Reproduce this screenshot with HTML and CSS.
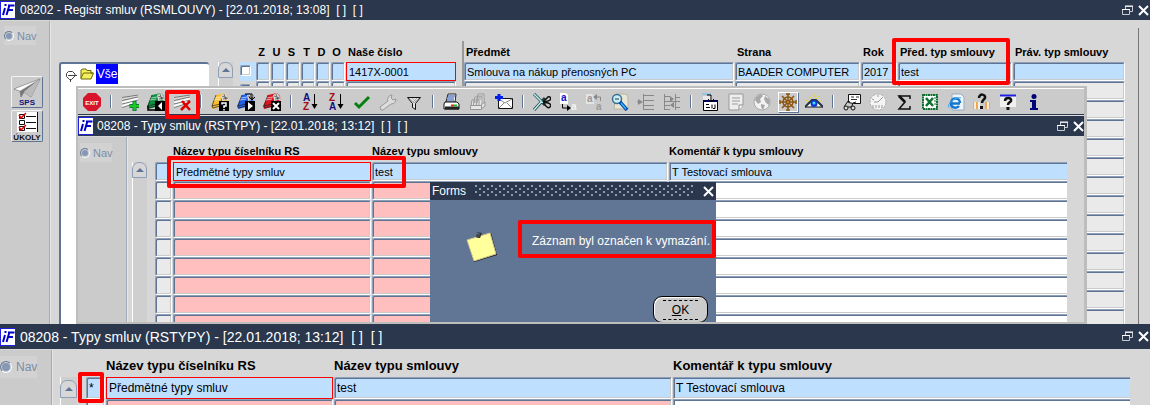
FILE: index.html
```html
<!DOCTYPE html>
<html lang="cs">
<head>
<meta charset="utf-8">
<title>Registr smluv</title>
<link rel="stylesheet" href="styles.css">
</head>
<body>
<svg class="defs" aria-hidden="true">
  <symbol id="logo" viewBox="0 0 16 18">
    <rect width="16" height="18" fill="#fff"/><path d="M0 .5h16M0 17.5h16M15.5 0v18M.5 0v18" stroke="#2020e0"/>
    <path d="M5 7 3 14M5.500 3v2M9.500 4 6.500 14M8 4.500h6.500M8 9h5" stroke="#0000c8" stroke-width="2" fill="none"/>
  </symbol>
  <symbol id="restore" viewBox="0 0 11 11">
    <path d="M3.500 4V1.500h7v5H8M3 1.500h8" stroke="#c8ccd2" fill="none"/><path d="M.5 4.500h7v5h-7z" stroke="#c8ccd2" fill="none"/><path d="M3 1h8M0 4.500h8" stroke="#fff"/>
  </symbol>
  <symbol id="close" viewBox="0 0 11 11"><path d="m1 1 9 9M10 1 1 10" stroke="#fff" stroke-width="2"/></symbol>
  <symbol id="sheet" viewBox="0 0 18 18">
    <path d="M1 4 17 1v8L1 15z" fill="#d8d8d4"/><path d="M1 4.500 17 2M1 7.500 17 4M1 11 17 7M1 14.500 15 10" stroke="#777" fill="none"/><path d="M1 9.500 17 5.500M1 13 14 9" stroke="#fff" stroke-width="1.500"/>
  </symbol>
  <symbol id="book" viewBox="0 0 18 18">
    <path d="M5 2 14 0l3 3 1 8-9 3-8 2-1-3z" fill="currentColor"/><path d="M5 2 1 13l8-2 3-8M1 13l1 2 7-2" stroke="#222" fill="none" stroke-width=".7"/><path d="m10 2 4-2 3 4 1 4-3-1-4 1z" fill="#d8d8d8"/><path d="m11 3 5 2M13 1l2 6M12 6l5-1" stroke="#444" stroke-width=".7"/><path d="m4 5 6-1M3 7l6-1" stroke="#fff" stroke-opacity=".6"/>
    <path d="M8 8h10v10H8z" fill="#000"/>
  </symbol>
</svg>

<main class="desktop">
<section class="window window-main">
  <header class="titlebar">
    <svg class="logo"><use href="#logo"/></svg>
    <h1>08202 - Registr smluv (RSMLOUVY) - [22.01.2018; 13:08]&nbsp; [ ]&nbsp; [ ]</h1>
    <button class="win-btn" aria-label="Obnovit"><svg><use href="#restore"/></svg></button>
    <button class="win-btn" aria-label="Zavřít"><svg><use href="#close"/></svg></button>
  </header>
  <div class="workspace">
    <aside class="side">
      <label class="nav"><input type="radio" name="nav-main" checked>Nav</label>
      <button class="tile" aria-label="SPS">
        <svg viewBox="0 0 30 30"><path d="M2 12 28 2 19 20l-7-5-3 5-1-6z" fill="#eee" stroke="#777" stroke-width=".8"/><path d="M8 14 28 2 12 15l-3 5z" fill="#777"/><path d="m12 15 16-13-9 18z" fill="#bbb"/><path d="M2 12 28 2 8 14z" fill="#fff" stroke="#888" stroke-width=".5"/><text x="15" y="28" text-anchor="middle" class="sps-text">SPS</text></svg>
      </button>
      <button class="tile" aria-label="ÚKOLY">
        <svg viewBox="0 0 30 30"><path d="M5 1h20v20H5z" fill="#fff"/><path d="M7.500 3.500h5v4h-5zM7.500 9.500h5v4h-5zM7.500 15.500h5v4h-5zM14 5.500h10M14 11.500h10M14 17.500h10M25.500 1v20" fill="none" stroke="#111"/><path d="m7 4 2 3 5-5M7 16l2 3 5-5" fill="none" stroke="#e00000" stroke-width="1.500"/><text x="15" y="29" text-anchor="middle" class="tasks-text">ÚKOLY</text></svg>
      </button>
    </aside>
    <div class="tree">
      <svg class="tree-toggle" viewBox="0 0 13 12"><path d="m3.500 1.500h4l2.500 2.500v2l-3.500 3.500h-2L1.500 6.500v-3z" fill="#fff" stroke="#444"/><path d="M3 5.500h9M5.500 9v3" stroke="#444"/></svg>
      <svg class="tree-folder" viewBox="0 0 14 12"><path d="M1 10V2l2-1h3l1 1.500h4V5h2.500L11 11H1z" fill="#f4ee60" stroke="#6b6800"/><path d="m1 10 2.500-5H13" fill="none" stroke="#6b6800"/></svg>
      <span class="tree-item">Vše</span>
    </div>
    <div class="scroll scroll-main"><button aria-label="Nahoru"></button></div>
    <div class="records records-main">
      <table>
        <colgroup><col class="w-check"><col class="w-flag" span="6"><col class="w-number"><col><col class="w-party"><col class="w-year"><col class="w-subject"><col class="w-legal"></colgroup>
        <thead><tr><th></th><th class="flag">Z</th><th class="flag">U</th><th class="flag">S</th><th class="flag">T</th><th class="flag">D</th><th class="flag">O</th><th class="ruled">Naše číslo</th><th>Předmět</th><th>Strana</th><th>Rok</th><th class="marked">Před. typ smlouvy<span class="highlight highlight-type"></span></th><th>Práv. typ smlouvy</th></tr></thead>
        <tbody data-empty-rows="13">
          <tr class="current"><td class="check"><input type="checkbox" aria-label="Vybrat"></td><td><input aria-label="Z"></td><td><input aria-label="U"></td><td><input aria-label="S"></td><td><input aria-label="T"></td><td><input aria-label="D"></td><td><input aria-label="O"></td><td class="ruled"><input class="focus" aria-label="Naše číslo" value="1417X-0001"></td><td><input aria-label="Předmět" value="Smlouva na nákup přenosných PC"></td><td><input aria-label="Strana" value="BAADER COMPUTER"></td><td><input aria-label="Rok" value="2017"></td><td><input aria-label="Před. typ smlouvy" value="test"></td><td><input aria-label="Práv. typ smlouvy"></td></tr>
        </tbody>
      </table>
    </div>
  </div>

  <section class="window window-types">
    <nav class="toolbar">
      <button aria-label="Konec"><svg viewBox="0 0 18 18"><path d="M5 0h8l5 5v8l-5 5H5l-5-5V5z" fill="#d8142c"/><text x="9" y="12" text-anchor="middle" class="exit-text">EXIT</text></svg></button><i></i>
      <button aria-label="Vložit"><svg viewBox="0 0 18 18"><use href="#sheet"/><path d="M13.500 8v10M8.500 13h10" stroke="#064" stroke-width="4"/><path d="M13.500 8.500v9M9 13h9" stroke="#20c820" stroke-width="2.500"/></svg></button>
      <button aria-label="Předchozí"><svg viewBox="0 0 18 18"><use href="#book" color="#0b9040"/><path d="m15 9-4 4 4 4z" fill="#fff"/><path d="M1 13v4h7" fill="none" stroke="#000" stroke-width="1.500"/></svg></button>
      <button class="marked" aria-label="Smazat"><svg viewBox="0 0 18 18"><use href="#sheet"/><path d="m9 8 8 9M17 8l-9 9" stroke="#e00000" stroke-width="2.500"/></svg><span class="highlight highlight-delete"></span></button><i></i>
      <button aria-label="Zadat dotaz"><svg viewBox="0 0 18 18"><use href="#book" color="#f8c030"/><path d="M11 11.500V10h4v3h-2v2M13 16v1.500" fill="none" stroke="#fff" stroke-width="1.500"/></svg></button>
      <button aria-label="Provést dotaz"><svg viewBox="0 0 18 18"><use href="#book" color="#2060e8"/><path d="m11 9 5 4-5 4z" fill="#fff"/><path d="M8 1h7v5m-3-2 3 3 3-3" fill="none" stroke="#000"/></svg></button>
      <button aria-label="Zrušit dotaz"><svg viewBox="0 0 18 18"><use href="#book" color="#d81820"/><path d="m10 10 6 6M16 10l-6 6" stroke="#fff" stroke-width="2"/></svg></button><i></i>
      <button aria-label="Řadit vzestupně"><svg viewBox="0 0 18 18"><text x="2" y="8" class="sort-blue">A</text><text x="2" y="17" class="sort-red">Z</text><path d="M13.500 1v12" stroke="#000"/><path d="M10.500 11h6l-3 5z"/></svg></button>
      <button aria-label="Řadit sestupně"><svg viewBox="0 0 18 18"><text x="2" y="8" class="sort-red">Z</text><text x="2" y="17" class="sort-blue">A</text><path d="M13.500 1v12" stroke="#000"/><path d="M10.500 11h6l-3 5z"/></svg></button>
      <button aria-label="Uložit"><svg viewBox="0 0 18 18"><path d="m2 10 4 4L16 4" fill="none" stroke="#078010" stroke-width="3"/></svg></button>
      <button aria-label="Nástroje"><svg viewBox="0 0 18 18"><path d="M2 17 1 14l8-6c-1-3 1-6 4-6l-1 3 2 2 3-1c0 3-2 5-5 5l-8 6z" fill="#ddd" stroke="#999"/></svg></button>
      <button aria-label="Filtr"><svg viewBox="0 0 18 18"><path d="M2.500 4.500h13l-5 6v6l-3-2v-4z" fill="#e4e4e4" stroke="#111"/><path d="m4 5 5 5 5-5M7 5l4 4M8 9l4-4" stroke="#888" fill="none" stroke-width=".6"/></svg></button><i></i>
      <button aria-label="Tisk"><svg viewBox="0 0 18 18"><path d="M5 1h8l-1 8H3z" fill="#fff" stroke="#222"/><path d="M5 3h7M5 5h6M4 7h7" stroke="#14a"/><path d="M2 9h12l2 2v5H1v-5z" fill="#fff" stroke="#111"/><path d="M2 13.500h14v3H2z" fill="#222"/><path d="M8 12.500h3" stroke="#e22" stroke-width="2"/><path d="M11 12.500h3" stroke="#2b2" stroke-width="2"/></svg></button>
      <button aria-label="Tisk více"><svg viewBox="0 0 18 18" fill="#e6e6e6" stroke="#969696"><path d="M9 1h6v10l-4 3H7zM6 4h7v10H4zM3 7h7v6H2z"/><path d="M1.500 12.500h11v4h-11zM12 12l4-3v4l-4 3M4 9h5M7 6h5M9 3h5"/></svg></button>
      <button aria-label="Poslat"><svg viewBox="0 0 18 18"><path d="M3.500 5.500h14v10h-14z" fill="#fff" stroke="#111"/><path d="m4 6 6 4 7-4M4 15l5-5m8 5-5-5" fill="none" stroke="#888"/><path d="M4 1v7M0 4.500h8" stroke="#0020e8" stroke-width="3"/></svg></button><i></i>
      <button aria-label="Vyjmout"><svg viewBox="0 0 18 18"><path d="M1 1 12 12M1 17 12 5" stroke="#244" stroke-width="3"/><path d="m1 1 9 9M1 17l8-9" stroke="#b8eef4" stroke-width="1.500"/><path d="m10 9 4-4c2-3 5 0 3 2s-5 1-6 2 4 0 6 2-1 5-3 3l-4-4" fill="none" stroke="#111" stroke-width="1.500"/></svg></button>
      <button aria-label="Kopírovat"><svg viewBox="0 0 18 18"><path d="M1 0h6l2 2v9H1z" fill="#fff"/><text x="2" y="8" class="copy-blue">a</text><text x="12" y="17" class="copy-white">a</text><path d="M3.500 11v4h5" fill="none" stroke="#000"/><path d="m8 12 4 3-4 3z"/></svg></button>
      <button aria-label="Vložit text"><svg viewBox="0 0 18 18"><path d="M1 1h6l2 2v8H1z" fill="#e4e4e4"/><text x="2" y="9" class="copy-gray">a</text><text x="11" y="17" class="copy-gray">a</text><path d="M15.500 8V4H11" fill="none" stroke="#888"/><path d="m12 1-4 3 4 3z" fill="#888"/></svg></button>
      <button aria-label="Hledat"><svg viewBox="0 0 18 18"><path d="M5 1h10l2 3v12H3z" fill="#e9e6d6" stroke="#b8b4a4"/><circle cx="6" cy="6" r="4.500" fill="#c6edf8" stroke="#3a7090" stroke-width="1.500"/><path d="M4 6h4" stroke="#333"/><path d="m9 9 7 8" stroke="#0048b0" stroke-width="3.500"/><path d="m10 10 5 6" stroke="#30b8f8" stroke-width="1.500"/></svg></button>
      <button aria-label="Odsadit"><svg viewBox="0 0 18 18"><path d="M6.500 1v16M7 2.500h10M7 7.500h10M7 12.500h10M7 16.500h10" stroke="#888"/><path d="M0 9h3" stroke="#888"/><path d="m1 6 5 3-5 3z" fill="#888"/></svg></button>
      <button aria-label="Zarovnat"><svg viewBox="0 0 18 18"><path d="M1.500 1v16M12.500 1v16M2 3.500h5M2 8.500h15M2 12.500h5M2 16.500h5M12 4.500h5M12 14.500h5" stroke="#888"/><path d="m7 3 4 3-4 3zM11 9l-4 3 4 3z" fill="#888"/></svg></button><i></i>
      <button aria-label="Kalendář"><svg viewBox="0 0 18 18"><path d="M1 1h9" stroke="#60c0f8"/><path d="M2 3h9v5H2z" fill="#e8e8e8"/><path d="M2.500 7.500h14v10h-14z" fill="#fff" stroke="#000"/><path d="M2 8h15" stroke="#000050" stroke-width="2"/><path d="M6 2h4v6M7 6l3 3 3-3M5 11.500h3M5 14.500h4m2-3v4m3-4v4h-2" fill="none" stroke="#000"/></svg></button>
      <button aria-label="Poznámka"><svg viewBox="0 0 18 18"><path d="M2 1h14v11l-4 5H2z" fill="#eee" stroke="#999"/><path d="M5 5h8M5 8h8M5 11h6" stroke="#999"/><path d="M12 17v-5h4" fill="#fff" stroke="#888"/></svg></button>
      <button aria-label="Web"><svg viewBox="0 0 18 18"><circle cx="9" cy="9" r="8" fill="#f2f2f2" stroke="#a8a8a8"/><path d="m3 4 5-3 2 2-3 3 1 3-3 2-3-4zM8 11l4 1-2 5-2-3zM12 3l5 4-1 5-3-2-2-4z" fill="#a8a8a8"/></svg></button>
      <button class="raised" aria-label="Navigátor"><svg viewBox="0 0 18 18" fill="none" stroke="#8b5510" stroke-width="1.500"><circle cx="9" cy="9" r="5"/><path d="M9 1v16M1 9h16M3 3l12 12M15 3 3 15M7 1h4M7 17h4M1 7v4M17 7v4"/><circle cx="9" cy="9" r="1.500" fill="#e8c070"/></svg></button>
      <button aria-label="Zobrazit"><svg viewBox="0 0 18 18"><path d="m1 7 3 2m0-6 3 3m2-5v3m5-1-3 3m6 1-3 2" stroke="#e8d820"/><path d="m0 14 7-7h4l7 7z" fill="#fff" stroke="#111"/><path d="m0 14 7-7h4l7 7" fill="none" stroke="#234" stroke-width="2"/><circle cx="9" cy="10.500" r="3.500" fill="#1038d0"/><circle cx="9" cy="10" r="1.500" fill="#40e0ff"/></svg></button><i></i>
      <button aria-label="Prohlížet"><svg viewBox="0 0 18 18"><path d="M5.500 1.500h12v9h-7l-5-1z" fill="#fff" stroke="#111"/><path d="M8 4h3m2 0h3M8 6.500h6" stroke="#333"/><path d="M1 14 5 8l2 1M8 15l2-5 3-1" fill="none" stroke="#111"/><circle cx="3" cy="15" r="2" fill="#ddd" stroke="#111"/><circle cx="10" cy="15" r="2" fill="#ddd" stroke="#111"/><path d="M5 14h3" stroke="#111"/></svg></button>
      <button aria-label="Čas"><svg viewBox="0 0 18 18"><circle cx="9" cy="9" r="8" fill="#f4f4f4" stroke="#b0b0b0" stroke-dasharray="3 1"/><path d="m9 9 5-5M9 9H5M9 2v2M3 6l2 1" stroke="#999"/><path d="M4 12v3m3-3v3m3-3v3m3-3v3" stroke="#999"/></svg></button>
      <button aria-label="Součet"><svg viewBox="0 0 18 18"><path d="M15 6V3H4l6 6-6 7h11v-3" fill="none" stroke="#111" stroke-width="1.500"/><path d="m4 3 6 6" stroke="#111" stroke-width="2.500"/></svg></button>
      <button aria-label="Excel"><svg viewBox="0 0 18 18"><path d="M2 2h14v14H2z" fill="#fff" stroke="#107030" stroke-width="2" stroke-dasharray="2 .5"/><path d="m5 5 7 8M12 5l-7 8" stroke="#107030" stroke-width="2.500"/><path d="M13 5h2m-2 3h2m-2 3h2" stroke="#107030"/></svg></button>
      <button aria-label="Prohlížeč"><svg viewBox="0 0 18 18"><path d="M5 1h9l3 3v13H5z" fill="#eef4fc" stroke="#9ab"/><path d="M13 10.500H4c0 5 6 5 8 2.500M4 10c0-6 9-6 9 0" fill="none" stroke="#1478d0" stroke-width="2.500"/><path d="M2 15c-3-4 7-12 12-10" fill="none" stroke="#40a8f0"/></svg></button>
      <button aria-label="Podpora"><svg viewBox="0 0 18 18"><path d="M0 9h5v7H0zM12 9h5v7h-5z" fill="#f0a850"/><path d="M2 9v7m4-7v7m9-7v7" stroke="#fff" stroke-width="1.500"/><path d="M6 5c0-5 7-4 6 0-1 2-3 2-3 5" fill="none" stroke="#111" stroke-width="2.500"/><path d="M7 13h3v3H7z" fill="#111"/></svg></button>
      <button aria-label="Nápověda"><svg viewBox="0 0 18 18"><path d="M1 2h16v12H1z" fill="#f0f0f0"/><path d="M1 2.500h16" stroke="#2020e0" stroke-width="2"/><path d="M6 8c0-4 7-4 6 0-1 2-3 1-3 4" fill="none" stroke="#111" stroke-width="2.500"/><path d="M7.500 14h3v3h-3z" fill="#111"/></svg></button>
      <button aria-label="Informace"><svg viewBox="0 0 18 18" fill="#000078"><circle cx="9" cy="3.500" r="2.500"/><path d="M5 7h6v8h2v2H5v-2h2V9H5z"/></svg></button>
    </nav>
    <header class="titlebar">
      <svg class="logo"><use href="#logo"/></svg>
      <h2>08208 - Typy smluv (RSTYPY) - [22.01.2018; 13:12]&nbsp; [ ]&nbsp; [ ]</h2>
      <button class="win-btn" aria-label="Obnovit"><svg><use href="#restore"/></svg></button>
      <button class="win-btn" aria-label="Zavřít"><svg><use href="#close"/></svg></button>
    </header>
    <div class="workspace">
      <aside class="side"><label class="nav"><input type="radio" name="nav-types" checked>Nav</label></aside>
      <div class="scroll"><button aria-label="Nahoru"></button></div>
      <div class="records">
        <table>
          <colgroup><col class="w-mark"><col class="w-list"><col class="w-type"><col></colgroup>
          <thead><tr><th></th><th>Název typu číselníku RS</th><th>Název typu smlouvy</th><th>Komentář k typu smlouvy</th></tr></thead>
          <tbody data-empty-rows="8">
            <tr class="current"><td><input aria-label="Příznak"></td><td class="required marked"><input class="focus" aria-label="Název typu číselníku RS" value="Předmětné typy smluv"><span class="highlight highlight-record"></span></td><td class="required"><input aria-label="Název typu smlouvy" value="test"></td><td class="open"><input aria-label="Komentář k typu smlouvy" value="T Testovací smlouva"></td></tr>
          </tbody>
        </table>
      </div>
    </div>
    <div class="dialog" role="dialog" aria-label="Forms">
      <header><span>Forms</span><i class="grip"></i><button class="win-btn" aria-label="Zavřít"><svg><use href="#close"/></svg></button></header>
      <div class="dialog-body">
        <svg class="note" viewBox="0 0 32 32"><path d="m1 8 24-7 6 22-23 7z" fill="#111"/><path d="M1 8 24 1l6 21-22 7z" fill="#ffff9c" stroke="#cfc890"/><path d="m12 6 2-4-4-2 6 1-2 5z" fill="#333"/><circle cx="12" cy="4" r="2" fill="#444"/></svg>
        <p class="marked">Záznam byl označen k vymazání.<span class="highlight highlight-message"></span></p>
      </div>
      <footer><button class="ok"><span><u>O</u>K</span></button></footer>
    </div>
  </section>
</section>

<section class="window window-result">
  <header class="titlebar">
    <svg class="logo"><use href="#logo"/></svg>
    <h2>08208 - Typy smluv (RSTYPY) - [22.01.2018; 13:12]&nbsp; [ ]&nbsp; [ ]</h2>
    <button class="win-btn" aria-label="Obnovit"><svg><use href="#restore"/></svg></button>
    <button class="win-btn" aria-label="Zavřít"><svg><use href="#close"/></svg></button>
  </header>
  <div class="workspace">
    <aside class="side"><label class="nav"><input type="radio" name="nav-result" checked>Nav</label></aside>
    <div class="scroll"><button aria-label="Nahoru"></button></div>
    <div class="records">
      <table>
        <colgroup><col class="w-mark"><col class="w-list"><col class="w-type"><col></colgroup>
        <thead><tr><th></th><th>Název typu číselníku RS</th><th>Název typu smlouvy</th><th>Komentář k typu smlouvy</th></tr></thead>
        <tbody data-empty-rows="1">
          <tr class="current"><td class="marked"><input aria-label="Příznak" value="*"><span class="highlight highlight-flag"></span></td><td class="required"><input class="focus" aria-label="Název typu číselníku RS" value="Předmětné typy smluv"></td><td class="required"><input aria-label="Název typu smlouvy" value="test"></td><td class="open"><input aria-label="Komentář k typu smlouvy" value="T Testovací smlouva"></td></tr>
        </tbody>
      </table>
    </div>
  </div>
</section>
</main>
<script src="app.js"></script>
</body>
</html>
```

FILE: styles.css
```css
* { box-sizing: border-box; }

:root {
  --navy: #2a374d;
  --steel: #5f7495;
  --steel-light: #8e9fb8;
  --panel: #d7d7d7;
  --side: #cbcbcb;
  --blue: #bfdfff;
  --pink: #ffbfbf;
  --row: 19px;
  --head: 26px;
  --title: 22px;
  --text: 11px;
  --label: 11px;
}

body {
  margin: 0;
  font-family: "Liberation Sans", Arial, sans-serif;
  font-size: 11px;
  color: #000;
}

button, input { font: inherit; padding: 0; margin: 0; }
.defs { position: absolute; width: 0; height: 0; }

.desktop {
  display: grid;
  grid-template-rows: 4fr 1fr;
  height: 100vh;
  overflow: hidden;
}

.window {
  display: flex;
  flex-direction: column;
  min-height: 0;
  overflow: hidden;
  background: var(--panel);
}

.window-main { position: relative; --title: 20px; }

.window-types {
  position: absolute;
  left: 76px;
  right: 63px;
  top: 86px;
  bottom: 0;
  border: solid #bdbdbd;
  border-width: 2px 3px 2px 2px;
}

.window-result { --title: 25px; --row: 22px; --head: 28px; --text: 12px; --label: 13px; }

/* Title bars */
.titlebar {
  display: flex;
  align-items: center;
  flex: none;
  height: var(--title);
  padding-right: 1px;
  background: var(--navy);
  color: #fff;
}
.titlebar h1, .titlebar h2 {
  flex: 1;
  margin: 0 0 0 4px;
  font-size: 12px;
  font-weight: normal;
  white-space: nowrap;
}
.window-types .titlebar { padding-right: 0; }
.window-types .titlebar h2 { margin-left: 3px; }
.window-result .titlebar h2 { font-size: 14px; }
.logo { width: 16px; height: 18px; }
.win-btn {
  display: flex;
  flex: none;
  margin-left: 5px;
  border: 0;
  background: none;
}
.win-btn svg { width: 11px; height: 11px; }

/* Side panel */
.workspace { display: flex; flex: 1; min-height: 0; overflow: hidden; }
.side {
  display: flex;
  flex-direction: column;
  flex: none;
  width: 49px;
  margin-top: 1px;
  padding: 6px 0 0 2px;
  background: var(--side);
  border-right: 1px solid #a3adba;
  box-shadow: 1px 0 #e6e6e6;
}
.window-main > .workspace .side { width: 50px; padding: 5px 0 0 4px; }
.window-result .side { width: 52px; padding: 6px 0 0; }
.nav {
  display: flex;
  align-items: center;
  gap: 3px;
  width: 32px;
  height: 19px;
  background: #d2d2d2;
  font-size: 11px;
  color: #7c8ca6;
}
.window-result .nav { gap: 4px; width: 37px; height: 22px; font-size: 12px; }
.nav input {
  appearance: none;
  flex: none;
  width: 10px;
  height: 10px;
  border: 1px solid #6f7f96;
  border-right-color: #fff;
  border-bottom-color: #fff;
  border-radius: 50%;
  background: #8798b2;
  box-shadow: inset 0 0 0 1px #c8ced8;
}
.window-result .nav input { width: 12px; height: 12px; }
.tile {
  width: 32px;
  height: 32px;
  margin: 0 0 2px 7px;
  border: 1px solid #f4f4f4;
  border-right-color: var(--steel);
  border-bottom-color: var(--steel);
  border-radius: 2px;
  background: var(--side);
}
.nav + .tile { margin-top: 31px; }
.tile svg { display: block; width: 30px; height: 30px; }
.sps-text { font: bold 8px "Liberation Sans", sans-serif; fill: #10107c; }
.tasks-text { font: bold 8px "Liberation Sans", sans-serif; fill: #111; }

/* Tree */
.tree {
  display: flex;
  align-items: flex-start;
  flex: none;
  width: 150px;
  margin: 42px 0 0 9px;
  padding-left: 4px;
  background: #fff;
  border: solid var(--steel);
  border-width: 2px 0 0 2px;
  border-radius: 3px 3px 0 0;
}
.tree-toggle { width: 13px; height: 12px; margin-top: 6px; }
.tree-folder { width: 14px; height: 12px; margin: 4px 2px 0; }
.tree-item { width: 22px; background: #00f; color: #fff; font-size: 12px; line-height: 20px; text-align: center; }

/* Scrollbars */
.scroll {
  flex: none;
  width: 15px;
  margin: var(--head) 0 0 5px;
  border: solid #fff;
  border-width: 0 0 0 1px;
  background: #cfcfcf;
}
.scroll button {
  display: grid;
  place-items: center;
  width: 15px;
  height: 16px;
  margin-left: -1px;
  border: 1px solid var(--steel-light);
  border-radius: 7px 7px 0 0;
  background: var(--panel);
}
.scroll button::before {
  content: "";
  border: solid transparent;
  border-width: 0 4px 4px;
  border-bottom-color: var(--steel);
}
.scroll-main { margin: 42px 0 0 9px; }
.window-result .scroll { width: 17px; margin-left: 8px; padding-top: 3px; }
.window-result .scroll button { width: 17px; height: 18px; }

/* Record grids */
.records { flex: 1; min-width: 0; padding: 0 17px 0 8px; }
.records-main {
  position: relative;
  padding: 21px 24px 0 7px;
}
.records-main::after {
  content: "";
  position: absolute;
  top: 8px;
  right: 11px;
  bottom: 0;
  border-left: 1px solid #777;
}
.window-result .records { padding: 0 20px 0 9px; }
table { width: 100%; table-layout: fixed; border-collapse: separate; border-spacing: 0; }
th {
  height: var(--head);
  padding: 4px 0 0;
  font-size: var(--label);
  text-align: left;
  white-space: nowrap;
}
.records-main th { height: 21px; padding: 0 0 0 2px; }
.records-main th.flag { padding: 0 4px 0 0; text-align: center; }
td { height: var(--row); padding: 0 1px 0 0; vertical-align: top; line-height: 0; }
.ruled { border-right: 2px solid #999; padding-right: 6px; }

td input {
  display: block;
  width: 100%;
  height: var(--row);
  padding: 0 2px;
  border: 1px solid var(--steel-light);
  border-right-color: #fff;
  border-bottom-color: #fff;
  border-radius: 2px;
  box-shadow: inset 1px 1px var(--steel), inset -1px -1px #cbcbcb;
  background: #eaeaea;
  color: #000;
  font-size: var(--text);
  outline: 0;
}
td.required input { background: var(--pink); }
td.open { padding-right: 0; }
td.open input { border-right: 0; border-radius: 0; box-shadow: inset 1px 1px var(--steel), inset 0 -1px #cbcbcb; background: #fff; }
tr.current input, tr.current td.required input, tr.current td.open input { background: var(--blue); }
tr.current input.focus { border: 1px solid #f00; border-radius: 0; box-shadow: none; }
td.check { background: var(--panel); }
.current td.check { background: var(--blue); }
td.check input, tr.current td.check input {
  appearance: none;
  width: 11px;
  height: 11px;
  margin-top: 3px;
  padding: 0;
  background: #fff;
}

.w-check { width: 16px; }
.w-flag { width: 15px; }
.w-number { width: 118px; }
.w-party { width: 126px; }
.w-year { width: 37px; }
.w-subject { width: 115px; }
.w-legal { width: 113px; }
.w-mark { width: 18px; }
.w-list { width: 199px; }
.w-type { width: 297px; }
.window-result .w-mark { width: 20px; }
.window-result .w-list { width: 228px; }
.window-result .w-type { width: 339px; }

/* Toolbar */
.toolbar {
  display: flex;
  align-items: center;
  flex: none;
  height: 27px;
  padding-left: 1px;
  background: var(--side);
  border-top: 1px solid #fff;
  border-bottom: 1px solid var(--navy);
  box-shadow: 0 1px #ddd;
}
.toolbar + .titlebar { margin-top: 1px; }
.toolbar button {
  display: grid;
  place-items: center;
  flex: none;
  width: 26px;
  height: 20px;
  border: 0;
  background: none;
}
.toolbar svg { width: 18px; height: 18px; }
.toolbar i {
  flex: none;
  width: 2px;
  height: 13px;
  margin: 0 5px;
  border-left: 1px solid var(--steel);
  border-right: 1px solid #fff;
}
.toolbar .raised svg { box-shadow: 0 0 0 1px #fff, 1px 1px 0 1px var(--steel); }
.exit-text { font: bold 6px "Liberation Sans", sans-serif; fill: #fff; }
.sort-blue, .sort-red { font: bold 10px "Liberation Sans", sans-serif; fill: #101080; }
.sort-red { fill: #a01018; }
.copy-blue, .copy-white, .copy-gray { font: bold 10px "Liberation Sans", sans-serif; fill: #1010d0; }
.copy-white { fill: #f4f4f4; }
.copy-gray { fill: #999; }

/* Message dialog */
.dialog {
  position: absolute;
  left: 352px;
  top: 94px;
  display: flex;
  flex-direction: column;
  width: 286px;
  height: 141px;
  background: #617594;
  color: #fff;
}
.dialog header {
  display: flex;
  align-items: center;
  gap: 9px;
  height: 18px;
  padding: 0 2px;
  background: var(--navy);
  font-size: 12px;
}
.dialog .win-btn { margin: 0; }
.grip {
  flex: 1;
  height: 12px;
  background:
    radial-gradient(circle at 1px 1px, #8c9ab0 1px, transparent 1px) 0 0 / 8px 6px,
    radial-gradient(circle at 5px 4px, #8c9ab0 1px, transparent 1px) 0 0 / 8px 6px;
}
.dialog-body { display: flex; flex: 1; align-items: center; gap: 34px; padding: 0 8px 14px 36px; }
.note { flex: none; width: 32px; height: 32px; margin-top: 14px; }
.dialog p { margin: 0; font-size: 12px; white-space: nowrap; }
.dialog footer { display: flex; justify-content: flex-end; padding-right: 8px; }
.ok {
  width: 55px;
  height: 27px;
  border: 1px solid #000;
  border-radius: 9px;
  background: var(--side);
  box-shadow: inset 1px 1px #fff;
  font-size: 12px;
  color: #000;
}
.ok span { display: block; margin: 0 9px; border: dashed #000; border-width: 1px 0; line-height: 18px; }

/* Red annotation frames */
.marked { position: relative; }
.highlight {
  position: absolute;
  z-index: 2;
  border: 4px solid #f00;
  border-radius: 2px;
  pointer-events: none;
}
.highlight-type { left: -6px; top: -3px; width: 118px; height: 47px; }
.highlight-delete { left: -4px; top: -2px; width: 35px; height: 29px; }
.highlight-record { left: -6px; top: -6px; width: 239px; height: 32px; }
.highlight-message { left: -14px; right: -6px; top: -14px; height: 38px; }
.highlight-flag { left: -8px; top: -5px; width: 26px; height: 31px; }
.window-main, .window-types .toolbar { z-index: 0; }
```

FILE: app.js
```js
document.querySelectorAll("tbody[data-empty-rows]").forEach((body) => {
  const first = body.rows[0];
  for (let i = 0; i < Number(body.dataset.emptyRows); i++) {
    const row = first.cloneNode(true);
    row.classList.remove("current");
    row.querySelectorAll(".highlight").forEach((mark) => mark.remove());
    row.querySelectorAll("input").forEach((field) => {
      field.classList.remove("focus");
      field.removeAttribute("value");
    });
    body.append(row);
  }
});
```
